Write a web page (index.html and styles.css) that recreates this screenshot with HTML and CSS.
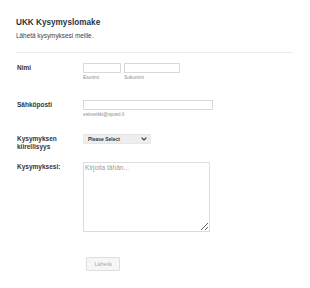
FILE: index.html
```html
<!DOCTYPE html>
<html lang="fi">
  <head>
    <meta charset="UTF-8" />
    <link rel="stylesheet" href="styles.css">
    <title>UKK Kysymyslomake</title>
  </head>
  <body>
  <form class="form">
    <div class="header">
      <h1>UKK Kysymyslomake</h1>
      <p class="subheader">Lähetä kysymyksesi meille.</p>
    </div>

    <div class="row row-name">
      <label class="label">Nimi</label>
      <div class="field">
        <div class="pair">
          <span class="sub first"><input type="text" /><span class="sublabel">Etunimi</span></span>
          <span class="sub last"><input type="text" /><span class="sublabel">Sukunimi</span></span>
        </div>
      </div>
    </div>

    <div class="row row-email">
      <label class="label">Sähköposti</label>
      <div class="field">
        <input class="email" type="text" />
        <span class="sublabel">esimerkki@sposti.fi</span>
      </div>
    </div>

    <div class="row row-select">
      <label class="label">Kysymyksen<br>kiirellisyys</label>
      <div class="field">
        <div class="select">
          <select>
            <option>Please Select</option>
          </select>
          <svg class="chevron" width="6" height="4" viewBox="0 0 6 4"><path d="M0.6 0.6 L3 3 L5.4 0.6" fill="none" stroke="#333" stroke-width="1.1"/></svg>
        </div>
      </div>
    </div>

    <div class="row row-text">
      <label class="label">Kysymyksesi:</label>
      <div class="field">
        <textarea placeholder="Kirjoita tähän..."></textarea>
      </div>
    </div>

    <div class="buttons">
      <button type="button">Lähetä</button>
    </div>
  </form>
</body>
</html>
```

FILE: styles.css
```css
* {
  box-sizing: border-box;
}
html, body {
  margin: 0;
  padding: 0;
  background: white;
}
body {
  font-family: "Liberation Sans", Arial, sans-serif;
  color: #2c3345;
}

.form {
  padding: 0 17px 0 16px;
}

/*===============================*/
/* Header                        */
/*===============================*/
.header {
  padding-top: 18px;
  padding-bottom: 12px;
  border-bottom: 1px solid #ececec;
}
.header h1 {
  margin: 0 0 4px 0;
  font-size: 8.2px;
  line-height: 10px;
  font-weight: bold;
}
.subheader {
  margin: 0;
  font-size: 6.4px;
  line-height: 8px;
  color: #3a3f4b;
}

/*===============================*/
/* Rows                          */
/*===============================*/
.row {
  display: flex;
}
.label {
  width: 67px;
  flex-shrink: 0;
  padding-left: 1px;
  font-size: 6.5px;
  line-height: 8px;
  font-weight: bold;
  padding-top: 1px;
  color: #32353c;
}
.field {
  display: flex;
  flex-direction: column;
  align-items: flex-start;
}
.row-name   { margin-top: 10px; }
.row-email  { margin-top: 19px; }
.row-select { margin-top: 16px; }
.row-text   { margin-top: 11px; }

input[type=text] {
  display: block;
  height: 10px;
  border: 1px solid #d9d9d9;
  padding: 0;
  margin: 0;
  background: white;
}
.pair {
  display: flex;
  gap: 3px;
}
.sub {
  display: flex;
  flex-direction: column;
}
.sub.first input { width: 38px; }
.sub.last input  { width: 56px; }

.sublabel {
  font-size: 4.8px;
  line-height: 6px;
  color: #8d8d8d;
  margin-top: 2px;
}
.email {
  width: 130px;
}

/* select with drawn chevron */
.select {
  position: relative;
  width: 68px;
  height: 10px;
}
.select select {
  display: block;
  appearance: none;
  -webkit-appearance: none;
  width: 100%;
  height: 10px;
  border: 1px solid #e6e6e6;
  background: #eeeeee;
  border-radius: 1px;
  font-family: "Liberation Sans", Arial, sans-serif;
  font-size: 5px;
  font-weight: bold;
  color: #333;
  padding: 0 0 0 4px;
  margin: 0;
  line-height: 8px;
}
.chevron {
  position: absolute;
  right: 4px;
  top: 3px;
  pointer-events: none;
}

textarea {
  display: block;
  width: 127px;
  height: 70px;
  border: 1px solid #dcdcdc;
  padding: 1px 1px;
  margin: 0;
  font-family: "Liberation Sans", Arial, sans-serif;
  font-size: 6.6px;
  line-height: 8px;
}
textarea::placeholder {
  color: #9a9a9a;
}

.buttons {
  display: flex;
  margin-top: 25px;
  padding-left: 70px;
}
.buttons button {
  width: 34px;
  height: 14px;
  border: 1px solid #dedede;
  border-radius: 1px;
  background: #f6f6f6;
  color: #a9a9a9;
  font-family: "Liberation Sans", Arial, sans-serif;
  font-size: 5.6px;
  padding: 0;
  margin: 0;
  box-shadow: 0 1px 1px rgba(0,0,0,0.08);
}
```
